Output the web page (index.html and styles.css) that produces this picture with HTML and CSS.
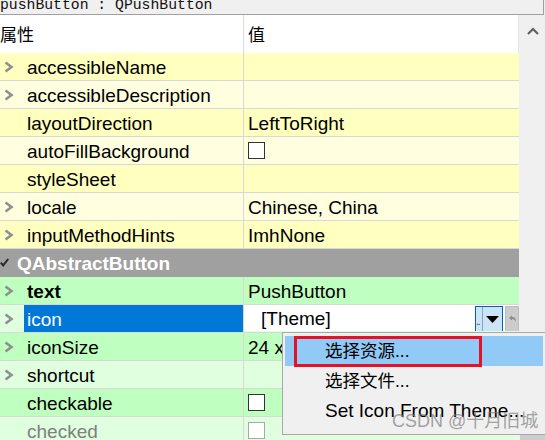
FILE: index.html
```html
<!DOCTYPE html>
<html>
<head>
<meta charset="utf-8">
<link rel="stylesheet" href="styles.css">
</head>
<body>
<div class="page">
  <div class="title"><div class="title-text">pushButton : QPushButton</div></div>
  <div class="main">
    <div class="table">
      <div class="header">
        <div class="hname">属性</div>
        <div class="hval">值</div>
      </div>

      <div class="row y1">
        <div class="name"><span class="exp"><svg width="10" height="12" viewBox="0 0 10 12"><polyline points="1.5,1.5 7.5,6 1.5,10.5" fill="none" stroke="#8f8f8f" stroke-width="2.6"/></svg></span><span class="label">accessibleName</span></div>
        <div class="val"></div>
      </div>
      <div class="row y2">
        <div class="name"><span class="exp"><svg width="10" height="12" viewBox="0 0 10 12"><polyline points="1.5,1.5 7.5,6 1.5,10.5" fill="none" stroke="#8f8f8f" stroke-width="2.6"/></svg></span><span class="label">accessibleDescription</span></div>
        <div class="val"></div>
      </div>
      <div class="row y1">
        <div class="name"><span class="exp"></span><span class="label">layoutDirection</span></div>
        <div class="val">LeftToRight</div>
      </div>
      <div class="row y2">
        <div class="name"><span class="exp"></span><span class="label">autoFillBackground</span></div>
        <div class="val"><span class="cb"></span></div>
      </div>
      <div class="row y1">
        <div class="name"><span class="exp"></span><span class="label">styleSheet</span></div>
        <div class="val"></div>
      </div>
      <div class="row y2">
        <div class="name"><span class="exp"><svg width="10" height="12" viewBox="0 0 10 12"><polyline points="1.5,1.5 7.5,6 1.5,10.5" fill="none" stroke="#8f8f8f" stroke-width="2.6"/></svg></span><span class="label">locale</span></div>
        <div class="val">Chinese, China</div>
      </div>
      <div class="row y1">
        <div class="name"><span class="exp"><svg width="10" height="12" viewBox="0 0 10 12"><polyline points="1.5,1.5 7.5,6 1.5,10.5" fill="none" stroke="#8f8f8f" stroke-width="2.6"/></svg></span><span class="label">inputMethodHints</span></div>
        <div class="val">ImhNone</div>
      </div>

      <div class="section">
        <span class="sec-check"><svg width="9" height="9" viewBox="0 0 9 9"><polyline points="0.8,4.6 3.2,7.4 8.2,1" fill="none" stroke="#2a2a2a" stroke-width="2"/></svg></span>
        <span class="sec-label">QAbstractButton</span>
      </div>

      <div class="row g1">
        <div class="name"><span class="exp"><svg width="10" height="12" viewBox="0 0 10 12"><polyline points="1.5,1.5 7.5,6 1.5,10.5" fill="none" stroke="#8f8f8f" stroke-width="2.6"/></svg></span><span class="label bold">text</span></div>
        <div class="val">PushButton</div>
      </div>
      <div class="row g2">
        <div class="name"><span class="exp"><svg width="10" height="12" viewBox="0 0 10 12"><polyline points="1.5,1.5 7.5,6 1.5,10.5" fill="none" stroke="#8f8f8f" stroke-width="2.6"/></svg></span><span class="label selected">icon</span></div>
        <div class="val editor">
          <span class="edit-text">[Theme]</span>
          <span class="tool">
            <span class="tool-dots">..</span>
            <span class="tool-arrow"><svg width="13" height="7" viewBox="0 0 13 7"><polygon points="0,0 13,0 6.5,7" fill="#000"/></svg></span>
          </span>
          <span class="reset"><svg width="9" height="8" viewBox="0 0 9 8"><path d="M1,3 L4,0.5 L4,2 Q8,2 8,7 Q7,4 4,4 L4,5.5 Z" fill="#8a8a8a"/></svg></span>
        </div>
      </div>
      <div class="row g1">
        <div class="name"><span class="exp"><svg width="10" height="12" viewBox="0 0 10 12"><polyline points="1.5,1.5 7.5,6 1.5,10.5" fill="none" stroke="#8f8f8f" stroke-width="2.6"/></svg></span><span class="label">iconSize</span></div>
        <div class="val">24 x 24</div>
      </div>
      <div class="row g2">
        <div class="name"><span class="exp"><svg width="10" height="12" viewBox="0 0 10 12"><polyline points="1.5,1.5 7.5,6 1.5,10.5" fill="none" stroke="#8f8f8f" stroke-width="2.6"/></svg></span><span class="label">shortcut</span></div>
        <div class="val"></div>
      </div>
      <div class="row g1">
        <div class="name"><span class="exp"></span><span class="label">checkable</span></div>
        <div class="val"><span class="cb"></span></div>
      </div>
      <div class="row g2">
        <div class="name"><span class="exp"></span><span class="label disabled">checked</span></div>
        <div class="val"><span class="cb cb-dis"></span></div>
      </div>
    </div>
    <div class="scroll">
      <div class="scroll-up"><svg width="12" height="8" viewBox="0 0 12 8"><polyline points="1,7 6,2 11,7" fill="none" stroke="#606060" stroke-width="2.2"/></svg></div>
      <div class="scroll-track"></div>
      <div class="scroll-thumb"></div>
    </div>
  </div>

  <div class="menu">
    <div class="item active"><span class="mark"></span>选择资源...</div>
    <div class="item">选择文件...</div>
    <div class="item latin">Set Icon From Theme...</div>
  </div>
  <div class="watermark">CSDN @十月旧城</div>
</div>
</body>
</html>
```

FILE: styles.css
```css
html, body {
  margin: 0;
  padding: 0;
}
body {
  width: 545px;
  height: 440px;
  overflow: hidden;
  background: #f0f0f0;
  font-family: "Liberation Sans", "Noto Sans CJK SC", sans-serif;
  font-size: 19px;
  color: #000;
}
.page {
  position: relative;
  width: 545px;
  height: 440px;
  overflow: hidden;
}
.title {
  height: 14px;
  width: 543px;
  border-bottom: 1px solid #a0a0a0;
  border-right: 1px solid #a0a0a0;
  background: #f0f0f0;
  overflow: hidden;
}
.title-text {
  font-family: "Liberation Mono", monospace;
  font-size: 14.75px;
  line-height: 14px;
  margin-top: -2px;
  white-space: pre;
  color: #111;
}
.main {
  display: flex;
  height: 425px;
}
.table {
  width: 519px;
  flex: none;
  display: flex;
  flex-direction: column;
}
.header {
  display: flex;
  height: 38px;
  background: #fff;
  font-family: "Noto Sans CJK SC", sans-serif;
  font-size: 17px;
}
.hname {
  width: 243px;
  border-right: 1px solid #dadada;
  line-height: 38px;
}
.hval {
  flex: 1;
  line-height: 38px;
  padding-left: 4px;
  border-right: 1px solid #e4e4e4;
}
.row {
  display: flex;
  height: 27px;
  border-bottom: 1px solid #d8d8d8;
  flex: none;
}
.y1 { background: #ffffbf; }
.y2 { background: #ffffdf; }
.g1 { background: #bfffbf; }
.g2 { background: #dfffdf; }
.name {
  width: 243px;
  flex: none;
  border-right: 1px solid #d8d8d8;
  display: flex;
}
.exp {
  width: 24px;
  flex: none;
  display: flex;
  align-items: center;
  padding-left: 4px;
  box-sizing: border-box;
}
.exp svg { display: block; }
.label {
  flex: 1;
  padding: 2px 0 0 3px;
  line-height: 25px;
  white-space: nowrap;
}
.label.bold { font-weight: bold; }
.label.selected {
  background: #0078d7;
  color: #fff;
}
.label.disabled { color: #808080; }
.val {
  flex: 1;
  padding: 2px 0 0 4px;
  line-height: 25px;
  white-space: nowrap;
  overflow: hidden;
  display: flex;
  align-items: flex-start;
}
.cb {
  display: block;
  width: 15px;
  height: 15px;
  margin-top: 3px;
  border: 1px solid #333;
  background: #fff;
}
.cb-dis { border-color: #a8a8a8; }
.section {
  height: 27px;
  border-bottom: 1px solid #a0a0a0;
  background: #a0a0a0;
  display: flex;
  align-items: center;
  flex: none;
}
.sec-check {
  width: 17px;
  padding-left: 0;
  box-sizing: border-box;
  display: flex;
  align-items: center;
}
.sec-label {
  color: #fff;
  font-weight: bold;
  padding-top: 2px;
}
.val.editor {
  background: #fff;
  padding: 0;
  height: 26px;
  align-items: stretch;
}
.edit-text {
  padding: 2px 0 0 17px;
  line-height: 24px;
  width: 214px;
  flex: none;
}
.tool {
  margin-top: 1px;
  width: 26px;
  height: 24px;
  border: 1px solid #0063b1;
  background: #cce4f7;
  display: flex;
  flex: none;
}
.tool-dots {
  width: 6px;
  border-right: 1px solid #7fa6c9;
  font-size: 10px;
  line-height: 30px;
  overflow: hidden;
  letter-spacing: -1px;
  color: #333;
}
.tool-arrow {
  flex: 1;
  display: flex;
  align-items: center;
  justify-content: center;
  padding-top: 1px;
}
.reset {
  margin: 1px 0 0 2px;
  width: 12px;
  height: 24px;
  background: #cccccc;
  border: 1px solid #bdbdbd;
  display: flex;
  align-items: center;
  justify-content: center;
  flex: none;
}
.scroll {
  flex: 1;
  display: flex;
  flex-direction: column;
  background: #f0f0f0;
}
.scroll-up {
  height: 20px;
  display: flex;
  justify-content: center;
  align-items: flex-end;
  padding-left: 2px;
}
.scroll-track { height: 398px; }
.scroll-thumb {
  flex: 1;
  margin-left: 1px;
  background: #cdcdcd;
}
.menu {
  position: absolute;
  left: 282px;
  top: 332px;
  width: 258px;
  height: 98px;
  background: #f0f0f0;
  border: 1px solid #a8a8a8;
  padding: 3px 2px 0 2px;
  font-family: "Liberation Sans", "Noto Sans CJK SC", sans-serif;
  font-size: 17.5px;
}
.item {
  position: relative;
  height: 30px;
  line-height: 30px;
  padding-left: 40px;
  white-space: nowrap;
}
.item.latin { font-size: 19px; }
.item.active { background: #91c9f7; }
.mark {
  position: absolute;
  left: 9px;
  top: 0;
  width: 182px;
  height: 25px;
  border: 3px solid #e81123;
}
.watermark {
  position: absolute;
  left: 392px;
  top: 406px;
  font-size: 18px;
  color: rgba(125, 125, 125, 0.7);
  font-family: "Liberation Sans", "Noto Sans CJK SC", sans-serif;
  white-space: nowrap;
}
```
